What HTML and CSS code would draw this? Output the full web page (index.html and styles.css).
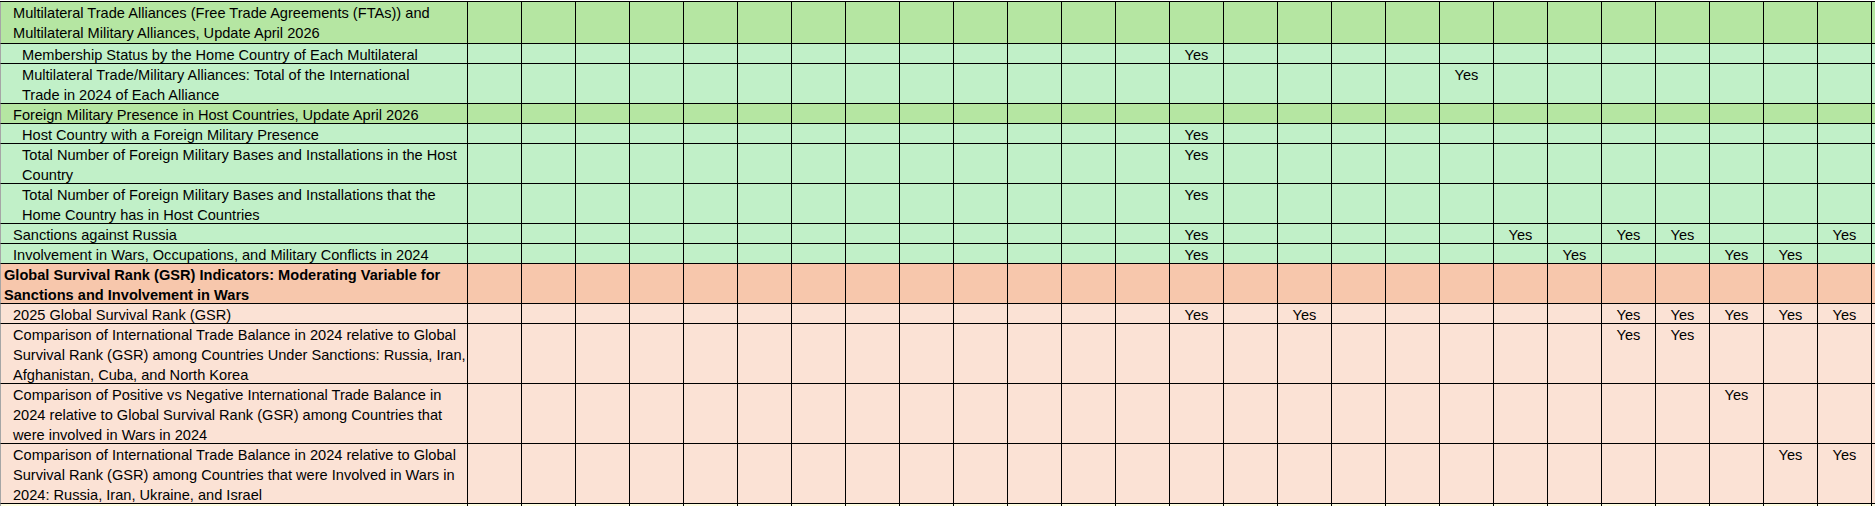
FILE: index.html
```html
<!DOCTYPE html>
<html lang="en">
<head>
<meta charset="utf-8">
<title>Alliances, Military Presence and GSR Indicators</title>
<link rel="stylesheet" href="styles.css">
</head>
<body>
<div class="sheet">
  <div class="row first g1">
    <div class="label in1">Multilateral Trade Alliances (Free Trade Agreements (FTAs)) and<br>Multilateral Military Alliances, Update April 2026</div>
    <span></span><span></span><span></span><span></span><span></span><span></span><span></span><span></span><span></span>
    <span></span><span></span><span></span><span></span><span></span><span></span><span></span><span></span><span></span>
    <span></span><span></span><span></span><span></span><span></span><span></span><span></span><span></span><span></span>
  </div>
  <div class="row g2">
    <div class="label in2">Membership Status by the Home Country of Each Multilateral</div>
    <span></span><span></span><span></span><span></span><span></span><span></span><span></span><span></span><span></span>
    <span></span><span></span><span></span><span></span><span>Yes</span><span></span><span></span><span></span><span></span>
    <span></span><span></span><span></span><span></span><span></span><span></span><span></span><span></span><span></span>
  </div>
  <div class="row l2 g2">
    <div class="label in2">Multilateral Trade/Military Alliances: Total of the International<br>Trade in 2024 of Each Alliance</div>
    <span></span><span></span><span></span><span></span><span></span><span></span><span></span><span></span><span></span>
    <span></span><span></span><span></span><span></span><span></span><span></span><span></span><span></span><span></span>
    <span>Yes</span><span></span><span></span><span></span><span></span><span></span><span></span><span></span><span></span>
  </div>
  <div class="row g1">
    <div class="label in1">Foreign Military Presence in Host Countries, Update April 2026</div>
    <span></span><span></span><span></span><span></span><span></span><span></span><span></span><span></span><span></span>
    <span></span><span></span><span></span><span></span><span></span><span></span><span></span><span></span><span></span>
    <span></span><span></span><span></span><span></span><span></span><span></span><span></span><span></span><span></span>
  </div>
  <div class="row g2">
    <div class="label in2">Host Country with a Foreign Military Presence</div>
    <span></span><span></span><span></span><span></span><span></span><span></span><span></span><span></span><span></span>
    <span></span><span></span><span></span><span></span><span>Yes</span><span></span><span></span><span></span><span></span>
    <span></span><span></span><span></span><span></span><span></span><span></span><span></span><span></span><span></span>
  </div>
  <div class="row l2 g2">
    <div class="label in2">Total Number of Foreign Military Bases and Installations in the Host<br>Country</div>
    <span></span><span></span><span></span><span></span><span></span><span></span><span></span><span></span><span></span>
    <span></span><span></span><span></span><span></span><span>Yes</span><span></span><span></span><span></span><span></span>
    <span></span><span></span><span></span><span></span><span></span><span></span><span></span><span></span><span></span>
  </div>
  <div class="row l2 g2">
    <div class="label in2">Total Number of Foreign Military Bases and Installations that the<br>Home Country has in Host Countries</div>
    <span></span><span></span><span></span><span></span><span></span><span></span><span></span><span></span><span></span>
    <span></span><span></span><span></span><span></span><span>Yes</span><span></span><span></span><span></span><span></span>
    <span></span><span></span><span></span><span></span><span></span><span></span><span></span><span></span><span></span>
  </div>
  <div class="row g2">
    <div class="label in1">Sanctions against Russia</div>
    <span></span><span></span><span></span><span></span><span></span><span></span><span></span><span></span><span></span>
    <span></span><span></span><span></span><span></span><span>Yes</span><span></span><span></span><span></span><span></span>
    <span></span><span>Yes</span><span></span><span>Yes</span><span>Yes</span><span></span><span></span><span>Yes</span><span></span>
  </div>
  <div class="row g2">
    <div class="label in1">Involvement in Wars, Occupations, and Military Conflicts in 2024</div>
    <span></span><span></span><span></span><span></span><span></span><span></span><span></span><span></span><span></span>
    <span></span><span></span><span></span><span></span><span>Yes</span><span></span><span></span><span></span><span></span>
    <span></span><span></span><span>Yes</span><span></span><span></span><span>Yes</span><span>Yes</span><span></span><span></span>
  </div>
  <div class="row l2 p1">
    <div class="label in0 bold">Global Survival Rank (GSR) Indicators: Moderating Variable for<br>Sanctions and Involvement in Wars</div>
    <span></span><span></span><span></span><span></span><span></span><span></span><span></span><span></span><span></span>
    <span></span><span></span><span></span><span></span><span></span><span></span><span></span><span></span><span></span>
    <span></span><span></span><span></span><span></span><span></span><span></span><span></span><span></span><span></span>
  </div>
  <div class="row p2">
    <div class="label in1">2025 Global Survival Rank (GSR)</div>
    <span></span><span></span><span></span><span></span><span></span><span></span><span></span><span></span><span></span>
    <span></span><span></span><span></span><span></span><span>Yes</span><span></span><span>Yes</span><span></span><span></span>
    <span></span><span></span><span></span><span>Yes</span><span>Yes</span><span>Yes</span><span>Yes</span><span>Yes</span><span></span>
  </div>
  <div class="row l3 p2">
    <div class="label in1">Comparison of International Trade Balance in 2024 relative to Global<br>Survival Rank (GSR) among Countries Under Sanctions: Russia, Iran,<br>Afghanistan, Cuba, and North Korea</div>
    <span></span><span></span><span></span><span></span><span></span><span></span><span></span><span></span><span></span>
    <span></span><span></span><span></span><span></span><span></span><span></span><span></span><span></span><span></span>
    <span></span><span></span><span></span><span>Yes</span><span>Yes</span><span></span><span></span><span></span><span></span>
  </div>
  <div class="row l3 p2">
    <div class="label in1">Comparison of Positive vs Negative International Trade Balance in<br>2024 relative to Global Survival Rank (GSR) among Countries that<br>were involved in Wars in 2024</div>
    <span></span><span></span><span></span><span></span><span></span><span></span><span></span><span></span><span></span>
    <span></span><span></span><span></span><span></span><span></span><span></span><span></span><span></span><span></span>
    <span></span><span></span><span></span><span></span><span></span><span>Yes</span><span></span><span></span><span></span>
  </div>
  <div class="row l3 p2">
    <div class="label in1">Comparison of International Trade Balance in 2024 relative to Global<br>Survival Rank (GSR) among Countries that were Involved in Wars in<br>2024: Russia, Iran, Ukraine, and Israel</div>
    <span></span><span></span><span></span><span></span><span></span><span></span><span></span><span></span><span></span>
    <span></span><span></span><span></span><span></span><span></span><span></span><span></span><span></span><span></span>
    <span></span><span></span><span></span><span></span><span></span><span></span><span>Yes</span><span>Yes</span><span></span>
  </div>
  <div class="row tail">
    <div class="label in1"></div>
    <span></span><span></span><span></span><span></span><span></span><span></span><span></span><span></span><span></span>
    <span></span><span></span><span></span><span></span><span></span><span></span><span></span><span></span><span></span>
    <span></span><span></span><span></span><span></span><span></span><span></span><span></span><span></span><span></span>
  </div>
</div>
</body>
</html>
```
FILE: styles.css
```css
html, body {
  margin: 0;
  padding: 0;
  overflow: hidden;
  background: #ffffff;
}

.sheet {
  width: max-content;
  margin-top: 1px;
  border-top: 1px solid #000000;
  font-family: "Liberation Sans", Arial, sans-serif;
  font-size: 14.6px;
  color: #000000;
}

.row {
  display: grid;
  grid-template-columns: 468px repeat(27, 54px);
  height: 20px;
}

.row > * {
  box-sizing: border-box;
  border-right: 1px solid #000000;
  border-bottom: 1px solid #000000;
  line-height: 20px;
  padding-top: 1px;
  overflow: hidden;
  white-space: nowrap;
}

.row > span {
  text-align: center;
}

.row > .label {
  border-left: 1px solid #a6a6a6;
}

.first { height: 42px; }
.l2 { height: 40px; }
.l3 { height: 60px; }

.in0 { padding-left: 3px; }
.in1 { padding-left: 12px; }
.in2 { padding-left: 21px; }

.bold { font-weight: bold; }

.g1 { background: #b5e6a2; }
.g2 { background: #c1f0c8; }
.p1 { background: #f7c7ac; }
.p2 { background: #fbe2d5; }
.tail { background: #fefee3; }
```
